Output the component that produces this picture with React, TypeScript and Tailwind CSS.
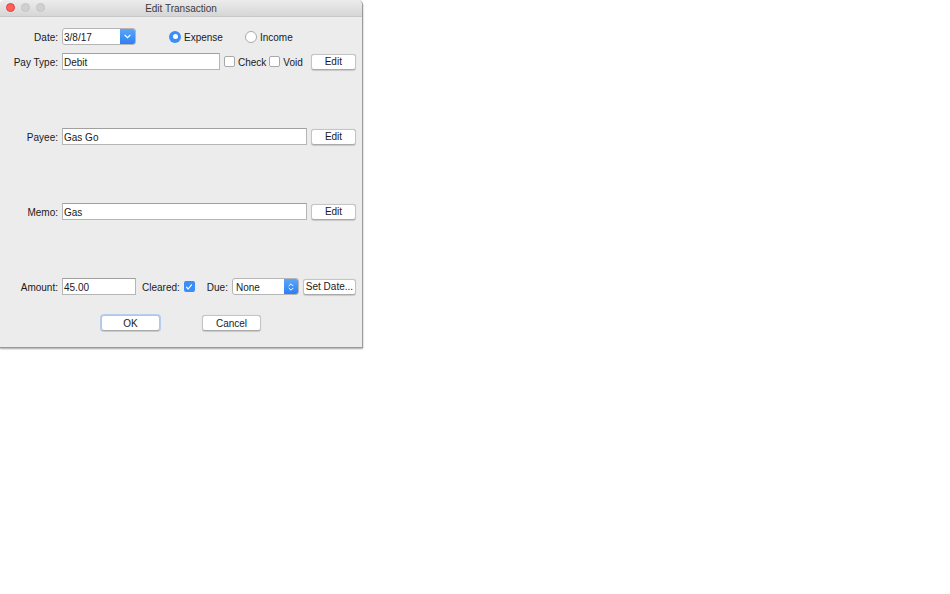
import React from 'react';

const font = { fontFamily: '"Liberation Sans", Arial, sans-serif' };

function MacButton({ label, className }: { label: string; className: string }) {
    return (
        <div
            className={`flex h-[16px] items-center justify-center rounded-[3px] border border-[#c4c4c4] border-b-[#a9a9a9] bg-white text-[10px] text-[#1a1a1a] shadow-[0_0.5px_1px_rgba(0,0,0,0.15)] ${className}`}
        >
            {label}
        </div>
    );
}

function TextField({ value, className }: { value: string; className: string }) {
    return (
        <div
            className={`flex h-[17px] items-center border border-[#b5b5b5] border-t-[#a0a0a0] bg-white pl-[1px] pt-[1px] text-[10px] text-[#1a1a1a] ${className}`}
        >
            {value}
        </div>
    );
}

function CheckBox({ checked }: { checked?: boolean }) {
    if (checked) {
        return (
            <div className="flex h-[11px] w-[11px] items-center justify-center rounded-[2px] bg-[#3b8ef7]">
                <svg width="8" height="8" viewBox="0 0 8 8">
                    <path d="M1.5 4.2 L3.2 6 L6.5 1.8" fill="none" stroke="white" strokeWidth="1.2" strokeLinecap="round" strokeLinejoin="round" />
                </svg>
            </div>
        );
    }
    return <div className="h-[11px] w-[11px] rounded-[2px] border border-[#a8a8a8] bg-white" />;
}

function Radio({ on }: { on?: boolean }) {
    if (on) {
        return (
            <div className="flex h-[12px] w-[12px] items-center justify-center rounded-full bg-[#3b8ef7]">
                <div className="h-[5px] w-[5px] rounded-full bg-white" />
            </div>
        );
    }
    return <div className="h-[12px] w-[12px] rounded-full border border-[#a8a8a8] bg-white" />;
}

function Label({ text }: { text: string }) {
    return <div className="w-[58px] shrink-0 pt-[1px] text-right text-[10px] text-[#1a1a1a]">{text}</div>;
}

export default function App() {
    return (
        <div className="h-[594px] w-[950px] bg-white" style={font}>
            <div className="w-[363px] overflow-hidden rounded-t-[5px] border-r border-b border-[#9a9a9a] bg-[#ececec] shadow-[0_1px_2px_rgba(0,0,0,0.35)]">
                {/* title bar */}
                <div className="relative flex h-[17px] items-center justify-center border-b border-[#c8c8c8] bg-gradient-to-b from-[#ececec] to-[#d6d6d6]">
                    <div className="absolute left-[6px] top-[3px] flex gap-[6px]">
                        <div className="h-[9px] w-[9px] rounded-full border border-[#e0443e] bg-[#fc605b]" />
                        <div className="h-[9px] w-[9px] rounded-full border border-[#c4c4c4] bg-[#d0d0d0]" />
                        <div className="h-[9px] w-[9px] rounded-full border border-[#c4c4c4] bg-[#d0d0d0]" />
                    </div>
                    <span className="text-[10px] text-[#3a3a3a]">Edit Transaction</span>
                </div>

                <div className="pb-[16px]">
                    {/* Date row */}
                    <div className="mt-[11px] flex h-[17px] items-center gap-[4px]">
                        <Label text="Date:" />
                        <div className="flex h-[17px] w-[74px] rounded-[3px] border border-[#b5b5b5] bg-white">
                            <div className="flex flex-1 items-center pl-[1px] pt-[1px] text-[10px] text-[#1a1a1a]">3/8/17</div>
                            <div className="flex w-[15px] items-center justify-center rounded-r-[2px] bg-gradient-to-b from-[#5aa6fb] to-[#2d7ef4]">
                                <svg width="7" height="5" viewBox="0 0 7 5">
                                    <path d="M1 1.2 L3.5 3.6 L6 1.2" fill="none" stroke="white" strokeWidth="1.2" strokeLinecap="round" />
                                </svg>
                            </div>
                        </div>
                        <div className="ml-[29px] flex items-center gap-[3px]">
                            <Radio on />
                            <span className="pt-[1px] text-[10px] text-[#1a1a1a]">Expense</span>
                        </div>
                        <div className="ml-[18px] flex items-center gap-[3px]">
                            <Radio />
                            <span className="pt-[1px] text-[10px] text-[#1a1a1a]">Income</span>
                        </div>
                    </div>

                    {/* Pay type row */}
                    <div className="mt-[8px] flex h-[17px] items-center gap-[4px]">
                        <Label text="Pay Type:" />
                        <TextField value="Debit" className="w-[158px]" />
                        <div className="flex items-center gap-[3px]">
                            <CheckBox />
                            <span className="pt-[1px] text-[10px] text-[#1a1a1a]">Check</span>
                        </div>
                        <div className="-ml-[1px] flex items-center gap-[3px]">
                            <CheckBox />
                            <span className="pt-[1px] text-[10px] text-[#1a1a1a]">Void</span>
                        </div>
                        <MacButton label="Edit" className="ml-[4px] w-[45px]" />
                    </div>

                    {/* Payee row */}
                    <div className="mt-[58px] flex h-[17px] items-center gap-[4px]">
                        <Label text="Payee:" />
                        <TextField value="Gas Go" className="w-[245px]" />
                        <MacButton label="Edit" className="w-[45px]" />
                    </div>

                    {/* Memo row */}
                    <div className="mt-[58px] flex h-[17px] items-center gap-[4px]">
                        <Label text="Memo:" />
                        <TextField value="Gas" className="w-[245px]" />
                        <MacButton label="Edit" className="w-[45px]" />
                    </div>

                    {/* Amount row */}
                    <div className="mt-[58px] flex h-[17px] items-center gap-[4px]">
                        <Label text="Amount:" />
                        <TextField value="45.00" className="w-[74px]" />
                        <span className="ml-[2px] pt-[1px] text-[10px] text-[#1a1a1a]">Cleared:</span>
                        <CheckBox checked />
                        <span className="ml-[8px] pt-[1px] text-[10px] text-[#1a1a1a]">Due:</span>
                        <div className="flex h-[17px] w-[67px] rounded-[3px] border border-[#b5b5b5] bg-white">
                            <div className="flex flex-1 items-center pl-[3px] pt-[1px] text-[10px] text-[#1a1a1a]">None</div>
                            <div className="flex w-[14px] items-center justify-center rounded-r-[2px] bg-gradient-to-b from-[#5aa6fb] to-[#2d7ef4]">
                                <svg width="6" height="10" viewBox="0 0 6 10">
                                    <path d="M1 3.8 L3 1.8 L5 3.8 M1 6.2 L3 8.2 L5 6.2" fill="none" stroke="white" strokeWidth="1" strokeLinecap="round" />
                                </svg>
                            </div>
                        </div>
                        <MacButton label="Set Date..." className="w-[53px]" />
                    </div>

                    {/* OK / Cancel */}
                    <div className="mt-[20px] flex h-[16px] items-center">
                        <MacButton label="OK" className="ml-[101px] w-[59px] border-[#7aa7e8] shadow-[0_0_0_1px_rgba(90,150,240,0.35)]" />
                        <MacButton label="Cancel" className="ml-[42px] w-[59px]" />
                    </div>
                </div>
            </div>
        </div>
    );
}
